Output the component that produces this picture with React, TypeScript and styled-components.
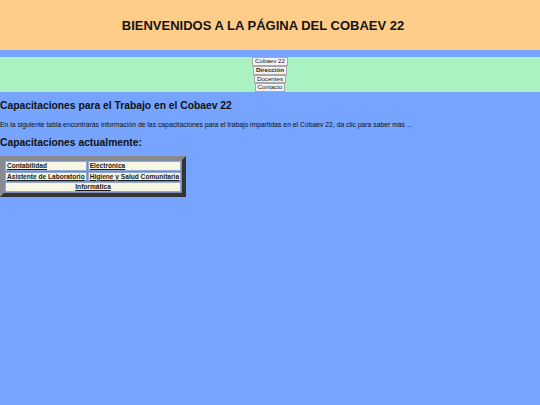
import * as React from 'react';
import styled, { createGlobalStyle } from 'styled-components';

const GlobalStyle = createGlobalStyle`
    html, body {
        margin: 0;
        padding: 0;
        background: #76a4fe;
        font-family: "Liberation Sans", Arial, sans-serif;
        color: #111;
    }
`;

const Page = styled.div`
    display: flex;
    flex-direction: column;
    min-height: 405px;
`;

const Header = styled.header`
    height: 50px;
    background: #ffcd8a;
    display: flex;
    align-items: center;
    justify-content: center;
    padding-right: 14px;
`;

const Title = styled.h1`
    margin: 0;
    font-size: 13px;
    font-weight: bold;
    color: #141414;
`;

const NavBand = styled.nav`
    margin-top: 7px;
    background: #aaf2c1;
    display: flex;
    justify-content: center;
`;

const NavList = styled.ul`
    list-style: none;
    margin: 0;
    padding: 0;
    display: flex;
    flex-direction: column;
    align-items: center;
`;

const NavItem = styled.li<{ active?: boolean }>`
    font-size: 6.2px;
    line-height: 6.75px;
    padding: 0 2px;
    background: #f2f2f2;
    border: 1px solid #a8a8a8;
    font-weight: ${({ active }) => (active ? 'bold' : 'normal')};
    color: #222;
`;

const Content = styled.main`
    padding-top: 7px;
`;

const Heading = styled.h2`
    margin: 0;
    font-size: 10.3px;
    font-weight: bold;
    line-height: 13px;
`;

const Intro = styled.p`
    margin: 9px 0 7px;
    font-size: 6.8px;
    line-height: 8px;
`;

const Table = styled.table`
    margin-top: 7px;
    border-style: solid;
    border-width: 4px;
    border-color: #8a8a8a #333 #333 #8a8a8a;
    border-spacing: 1px;
    background: #7b8cae;
`;

const Cell = styled.td<{ center?: boolean }>`
    background: #f6f6e2;
    border: 1px solid #93a9d6;
    padding: 0 1px;
    font-size: 6.6px;
    line-height: 7.6px;
    font-weight: bold;
    text-decoration: underline;
    text-align: ${({ center }) => (center ? 'center' : 'left')};
    color: #1a1a1a;
    white-space: nowrap;
`;

const navLinks = ['Cobaev 22', 'Dirección', 'Docentes', 'Contacto'];

export default function App() {
    return (
        <Page>
            <GlobalStyle />
            <Header>
                <Title>BIENVENIDOS A LA PÁGINA DEL COBAEV 22</Title>
            </Header>
            <NavBand>
                <NavList>
                    {navLinks.map((l) => (
                        <NavItem key={l} active={l === 'Dirección'}>{l}</NavItem>
                    ))}
                </NavList>
            </NavBand>
            <Content>
                <Heading>Capacitaciones para el Trabajo en el Cobaev 22</Heading>
                <Intro>
                    En la siguiente tabla encontrarás información de las capacitaciones para el trabajo impartidas en el Cobaev 22, da clic para saber más ...
                </Intro>
                <Heading>Capacitaciones actualmente:</Heading>
                <Table>
                    <tbody>
                        <tr>
                            <Cell>Contabilidad</Cell>
                            <Cell>Electrónica</Cell>
                        </tr>
                        <tr>
                            <Cell>Asistente de Laboratorio</Cell>
                            <Cell>Higiene y Salud Comunitaria</Cell>
                        </tr>
                        <tr>
                            <Cell colSpan={2} center>Informática</Cell>
                        </tr>
                    </tbody>
                </Table>
            </Content>
        </Page>
    );
}
